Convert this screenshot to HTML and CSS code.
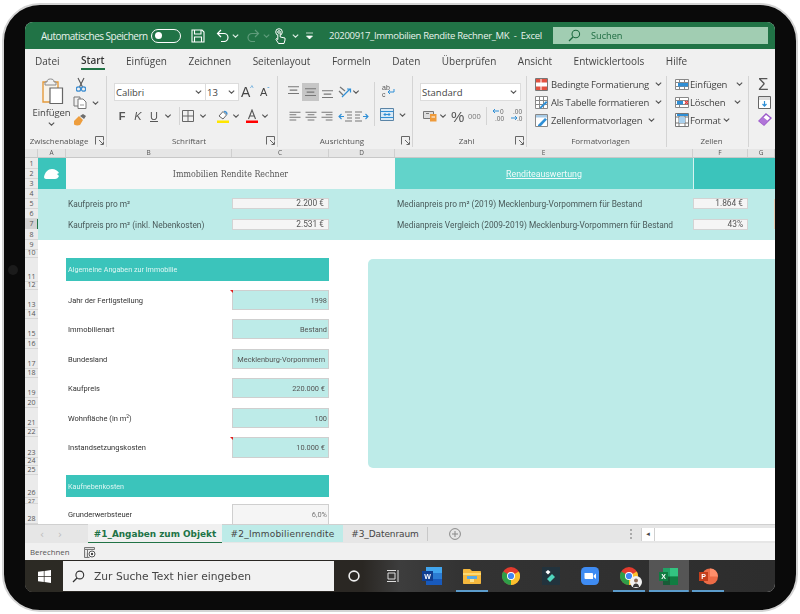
FILE: index.html
```html
<!DOCTYPE html>
<html lang="de">
<head>
<meta charset="utf-8">
<title>Immobilien Rendite Rechner</title>
<link rel="stylesheet" href="styles.css">
</head>
<body>
<svg class="defs" aria-hidden="true">
  <symbol id="chev" viewBox="0 0 7 4"><path d="M.8.6 3.5 3.2 6.2.6" fill="none" stroke="currentColor" stroke-width="1.1"/></symbol>
  <symbol id="launch" viewBox="0 0 9 9"><path d="M.5 8.5v-8h8v4M4 4l4 4M8.5 5.5v3h-3" fill="none" stroke="#666"/></symbol>
  <symbol id="lines" viewBox="0 0 15 13"><path d="M1 2h13M3 6h9M1 10h13" stroke="#777" stroke-width="1.3"/></symbol>
  <symbol id="lines-l" viewBox="0 0 15 13"><path d="M1 1.500h13M1 4.500h8M1 7.500h13M1 10.500h8" stroke="#777" stroke-width="1.200"/></symbol>
  <symbol id="lines-c" viewBox="0 0 15 13"><path d="M1 1.500h13M3.500 4.500h8M1 7.500h13M3.500 10.500h8" stroke="#777" stroke-width="1.200"/></symbol>
  <symbol id="lines-r" viewBox="0 0 15 13"><path d="M1 1.500h13M6 4.500h8M1 7.500h13M6 10.500h8" stroke="#777" stroke-width="1.200"/></symbol>
</svg>
<main class="device">
  <span class="camera"></span>
  <div class="screen">
    <header class="titlebar">
      <span class="autosave">Automatisches Speichern</span>
      <span class="toggle"><i></i></span>
      <svg class="qa qa-save" width="14" height="14" viewBox="0 0 14 14"><path d="M1 1h10l2 2v10H1zM3.5 1v4h6.500V1M3.500 13V8h7v5" fill="none" stroke="#fff" stroke-width="1.100"/></svg>
      <svg class="qa qa-undo" width="13" height="13" viewBox="0 0 13 13"><path d="M5 1 1.500 4.500 5 8M2 4.500h6a3.500 3.500 0 0 1 0 8H5" fill="none" stroke="#fff" stroke-width="1.200"/></svg>
      <svg class="chev qa-c1"><use href="#chev"/></svg>
      <svg class="qa qa-redo" width="13" height="13" viewBox="0 0 13 13"><path d="M8 1l3.500 3.500L8 8M11 4.500H5a3.500 3.500 0 0 0 0 8h3" fill="none" stroke="#5f9c7b" stroke-width="1.200"/></svg>
      <svg class="chev qa-c2"><use href="#chev"/></svg>
      <svg class="qa qa-touch" width="12" height="16" viewBox="0 0 12 16"><circle cx="5" cy="4" r="3.300" fill="none" stroke="#fff"/><circle cx="5" cy="4" r="1.300" fill="none" stroke="#fff"/><path d="M3.800 7v4.500L2.500 10.500 2 11.500l2.500 4H10l1-3.500v-2L6.200 9V5" fill="#217346" stroke="#fff"/></svg>
      <svg class="chev qa-c3"><use href="#chev"/></svg>
      <svg class="qa-more" width="9" height="8" viewBox="0 0 9 8"><path d="M1 1h7M1.500 4h6L4.500 7z" fill="#fff" stroke="#fff" stroke-width=".7"/></svg>
      <span class="doc-title">20200917_Immobilien Rendite Rechner_MK &nbsp;-&nbsp; Excel</span>
      <div class="searchbox">
        <svg width="13" height="13" viewBox="0 0 13 13"><circle cx="7.800" cy="5" r="3.800" fill="none" stroke="#1d6b40" stroke-width="1.100"/><path d="M5 8 1 12" stroke="#1d6b40" stroke-width="1.200"/></svg>
        <span>Suchen</span>
      </div>
    </header>

    <nav class="tabs">
      <span>Datei</span><span class="on">Start</span><span>Einfügen</span><span>Zeichnen</span><span>Seitenlayout</span><span>Formeln</span><span>Daten</span><span>Überprüfen</span><span>Ansicht</span><span>Entwicklertools</span><span>Hilfe</span>
    </nav>

    <section class="ribbon">
      <div class="group g-clip">
        <div class="group-body clip-body">
          <div class="paste">
            <svg width="24" height="27" viewBox="0 0 24 27"><path d="M3 4h15v20H3z" fill="#f7f3ea" stroke="#e49b3c" stroke-width="1.400"/><path d="M7 4c0-2 1-3 3.500-3S14 2 14 4h2v3H5V4z" fill="#f2f2f2" stroke="#8a8a8a"/><path d="M10 10h12.500v15.500H10z" fill="#fff" stroke="#666" stroke-width="1.200"/></svg>
            <span>Einfügen</span>
            <svg class="chev"><use href="#chev"/></svg>
          </div>
          <div class="clip-tools">
            <svg width="10" height="15" viewBox="0 0 10 15"><path d="M2 1l4.500 9M8 1 3.500 10" stroke="#555" stroke-width="1.100"/><circle cx="2.500" cy="12" r="2.200" fill="none" stroke="#3f8fd2" stroke-width="1.300"/><circle cx="7.500" cy="12" r="2.200" fill="none" stroke="#3f8fd2" stroke-width="1.300"/></svg>
            <span class="tool-row"><svg width="14" height="13" viewBox="0 0 14 13"><path d="M1 1h6v9H1z" fill="#f0f0f0" stroke="#777"/><path d="M5 3h5l3 3v6.500H5z" fill="#fff" stroke="#777"/><path d="M7 9h4" stroke="#999"/></svg><svg class="chev"><use href="#chev"/></svg></span>
            <svg width="14" height="13" viewBox="0 0 14 13"><path d="M1 8 6 3l4 4-3 5c-2 .6-4 .6-6-.5z" fill="#ed9d3d"/><path d="M7 3 10 1l3 2-2 3z" fill="#6d6d6d"/></svg>
          </div>
        </div>
        <div class="group-label"><span>Zwischenablage</span><svg class="launcher"><use href="#launch"/></svg></div>
      </div>

      <div class="group g-font">
        <div class="group-body">
          <div class="row-top">
            <div class="combo font-name"><span>Calibri</span><svg class="chev"><use href="#chev"/></svg></div>
            <div class="combo font-size"><span>13</span><svg class="chev"><use href="#chev"/></svg></div>
            <span class="grow-a big">A<sup>^</sup></span>
            <span class="grow-a small">A<sup>ˇ</sup></span>
          </div>
          <div class="row-low">
            <b class="fmt w16">F</b><i class="fmt w16">K</i><u class="fmt w16">U</u>
            <svg class="chev w12"><use href="#chev"/></svg>
            <span class="vsep font-sep"></span>
            <svg class="w16" width="12" height="12" viewBox="0 0 12 12"><path d="M.5.5h11v11H.5zM6 .5v11M.5 6h11" fill="none" stroke="#666"/></svg>
            <svg class="chev w14"><use href="#chev"/></svg>
            <svg class="w16 ml5" width="14" height="14" viewBox="0 0 14 14"><path d="M3 7 7 2.500 10.500 6 7 10z" fill="#fff" stroke="#666"/><path d="M8 2.500c2 0 3 1.500 3 3" fill="none" stroke="#3f8fd2" stroke-width="1.300"/><path d="M1 11.500h12V14H1z" fill="#ffe600"/></svg>
            <svg class="chev w10"><use href="#chev"/></svg>
            <svg class="w16 ml3" width="14" height="14" viewBox="0 0 14 14"><path d="M3.500 10 7 1l3.500 9M5 7h4" fill="none" stroke="#555" stroke-width="1.100"/><path d="M1 11.500h12V14H1z" fill="#f00"/></svg>
            <svg class="chev w10"><use href="#chev"/></svg>
          </div>
        </div>
        <div class="group-label"><span>Schriftart</span><svg class="launcher"><use href="#launch"/></svg></div>
      </div>

      <div class="group g-align">
        <div class="group-body align-body">
          <div class="align-main">
            <div class="row-top align-top">
              <span class="al"><svg width="13" height="11"><use href="#lines"/></svg></span>
              <span class="al al-on"><svg width="13" height="11"><use href="#lines"/></svg></span>
              <span class="al al-down"><svg width="13" height="11"><use href="#lines"/></svg></span>
              <svg class="orient" width="14" height="13" viewBox="0 0 14 13"><path d="M2 1l5 4M1 5l4 4" stroke="#777" stroke-width="1.300"/><path d="M4 11 12 3M9 3h3.500v3.500" fill="none" stroke="#2f8fd6" stroke-width="1.200"/></svg>
              <svg class="chev w8"><use href="#chev"/></svg>
            </div>
            <div class="row-low align-low">
              <svg class="w16" width="13" height="11"><use href="#lines-l"/></svg>
              <svg class="w16" width="13" height="11"><use href="#lines-c"/></svg>
              <svg class="w16" width="13" height="11"><use href="#lines-r"/></svg>
              <svg class="w16 ml2" width="14" height="11" viewBox="0 0 14 11"><path d="M7 1h7M9 4h5M9 7h5M7 10h7" stroke="#777"/><path d="M6 5.500H1M3.500 3 1 5.500 3.500 8" fill="none" stroke="#2f8fd6" stroke-width="1.100"/></svg>
              <svg class="w16 ml1" width="14" height="11" viewBox="0 0 14 11"><path d="M0 1h7M0 4h5M0 7h5M0 10h7" stroke="#777"/><path d="M8 5.500h5M10.500 3 13 5.500 10.500 8" fill="none" stroke="#2f8fd6" stroke-width="1.100"/></svg>
            </div>
          </div>
          <span class="vsep align-sep"></span>
          <div class="align-side">
            <svg class="wrap" width="13" height="15" viewBox="0 0 13 15"><text x="0" y="6.500" class="wrap-t">ab</text><text x="0" y="13.500" class="wrap-t">c</text><path d="M12 6v3H6M8 7 6 9l2 2" fill="none" stroke="#2f8fd6"/></svg>
            <span class="merge"><svg width="14" height="13" viewBox="0 0 14 13"><path d="M.5.500h13v12H.500z" fill="#d8e9f6" stroke="#5a84a6"/><path d="M4 6.500h6M5.500 5 4 6.500 5.500 8M8.500 5 10 6.500 8.500 8M.5 3.500h13M.5 9.500h13" fill="none" stroke="#2f8fd6"/></svg><svg class="chev"><use href="#chev"/></svg></span>
          </div>
        </div>
        <div class="group-label"><span>Ausrichtung</span><svg class="launcher"><use href="#launch"/></svg></div>
      </div>

      <div class="group g-num">
        <div class="group-body">
          <div class="row-top"><div class="combo num-fmt"><span>Standard</span><svg class="chev"><use href="#chev"/></svg></div></div>
          <div class="row-low num-low">
            <svg width="14" height="12" viewBox="0 0 14 12"><path d="M.5 1.500h10v7H.5z" fill="#ddd" stroke="#777"/><path d="M3 3.500h3" stroke="#777"/><path d="M7 4h6.500v7.500H7z" fill="#ee9a3a"/><path d="M8.500 7h3.500" stroke="#fff"/></svg>
            <svg class="chev w12"><use href="#chev"/></svg>
            <span class="pct">%</span>
            <span class="thou">000</span>
            <span class="vsep num-sep"></span>
            <span class="dec"><svg width="13" height="14" viewBox="0 0 13 14"><path d="M7 3H1M3 1 1 3l2 2" fill="none" stroke="#2f8fd6"/><text x="8" y="6" class="dec-t">0</text><text x="3" y="13" class="dec-t">.00</text></svg></span>
            <span class="dec"><svg width="13" height="14" viewBox="0 0 13 14"><text x="3" y="6" class="dec-t">.00</text><path d="M1 10h6M5 8l2 2-2 2" fill="none" stroke="#2f8fd6"/><text x="7" y="13" class="dec-t">.0</text></svg></span>
          </div>
        </div>
        <div class="group-label"><span>Zahl</span><svg class="launcher"><use href="#launch"/></svg></div>
      </div>

      <div class="group g-styles">
        <div class="group-body stack">
          <div class="stack-row"><svg width="13" height="13" viewBox="0 0 13 13"><path d="M.5.500h12v12H.500z" fill="#fff" stroke="#777"/><path d="M1 1h11v3.500H1zM1 8.500h11V12H1z" fill="#e25241"/><path d="M6 1v11" stroke="#fff"/></svg><span>Bedingte Formatierung</span><svg class="chev"><use href="#chev"/></svg></div>
          <div class="stack-row"><svg width="13" height="13" viewBox="0 0 13 13"><path d="M.5.500h12v12H.500zM.5 4.500h12M.5 8.500h12M4.500.500v12M8.500.500v12" fill="#fff" stroke="#888"/><path d="M5 11 11 5l1.500 1.500L6 12.500H5z" fill="#2f8fd6"/></svg><span>Als Tabelle formatieren</span><svg class="chev"><use href="#chev"/></svg></div>
          <div class="stack-row"><svg width="13" height="13" viewBox="0 0 13 13"><path d="M.5.500h12v12H.500z" fill="#fff" stroke="#888"/><path d="M1 1h11v2.500H1z" fill="#a8cbe6"/><path d="M3 11 10 4l2 1.500-6 6.500H3z" fill="#2f8fd6"/></svg><span>Zellenformatvorlagen</span><svg class="chev"><use href="#chev"/></svg></div>
        </div>
        <div class="group-label"><span>Formatvorlagen</span></div>
      </div>

      <div class="group g-cells">
        <div class="group-body stack">
          <div class="stack-row"><svg width="14" height="13" viewBox="0 0 14 13"><path d="M.5 1.500h13v10H.500zM.5 4.500h13M.5 8.500h13M4.500 1.500v10M9.500 1.500v10" fill="#fff" stroke="#888"/><path d="M3 5h10v3.500H3z" fill="#2f8fd6"/></svg><span>Einfügen</span><svg class="chev wide"><use href="#chev"/></svg></div>
          <div class="stack-row"><svg width="14" height="13" viewBox="0 0 14 13"><path d="M.5 1.500h13v10H.500zM.5 4.500h13M.5 8.500h13M4.500 1.500v10" fill="#fff" stroke="#888"/><path d="M2 5h6v3.500H2z" fill="#2f8fd6"/><path d="M10 5l3 3M13 5l-3 3" stroke="#e23b3b" stroke-width="1.200"/></svg><span>Löschen</span><svg class="chev wide"><use href="#chev"/></svg></div>
          <div class="stack-row"><svg width="14" height="14" viewBox="0 0 14 14"><path d="M.5.500h13v13H.500zM.5 4h13M.5 10h13M4 .500v13M10 .500v13" fill="#fff" stroke="#777"/><path d="M2 1h11v2H2z" fill="#2f8fd6"/><path d="M4 4h6v6H4z" fill="#a8d0ee"/></svg><span>Format</span><svg class="chev near"><use href="#chev"/></svg></div>
        </div>
        <div class="group-label"><span>Zellen</span></div>
      </div>

      <div class="group g-edit">
        <span class="sigma">Σ</span>
        <svg width="13" height="13" viewBox="0 0 13 13"><path d="M.5.500h12v12H.500z" fill="#fff" stroke="#666"/><path d="M1 1h11v3H1z" fill="#ddd"/><path d="M6.500 5v5M4.500 8l2 2.200 2-2.200" fill="none" stroke="#2f8fd6" stroke-width="1.200"/></svg>
        <svg width="14" height="13" viewBox="0 0 14 13"><path d="M1 8 8 1l5 4-7 7z" fill="#fff" stroke="#9b59c9" stroke-width="1.400"/><path d="M1 8l4-4 5 4-4 4z" fill="#b074d8"/></svg>
      </div>
    </section>

    <div class="col-heads">
      <span class="corner"></span>
      <span>A</span><span>B</span><span>C</span><span>D</span><span>E</span><span>F</span><span>G</span>
    </div>

    <div class="sheet">
      <div class="row-heads">
        <span>1</span><span>2</span><span>3</span><span>4</span><span>5</span><span>6</span><span class="sel">7</span><span>8</span><span>9</span><span>10</span><span>11</span><span>12</span><span>13</span><span>14</span><span>15</span><span>16</span><span>17</span><span>18</span><span>19</span><span>20</span><span>21</span><span>22</span><span>23</span><span>24</span><span>25</span><span>26</span><span class="tight">27</span><span>28</span>
      </div>
      <div class="cells">
        <div class="logo-cell"><svg width="16" height="10" viewBox="0 0 16 10"><path d="M0 8C1 3 4 0 8 0c3 0 6 2 7 4l-2 1 2 2c-1 2-2 3-4 3H2C1 10 0 9 0 8z" fill="#fff"/></svg></div>
        <div class="title-cell">Immobilien Rendite Rechner</div>
        <div class="report-cell">Renditeauswertung</div>
        <div class="accent-cell"></div>
        <div class="band"></div>
        <div class="band-edge"></div>

        <div class="kpi-label r5 cb">Kaufpreis pro m²</div>
        <div class="kpi-value r5 cc">2.200 €</div>
        <div class="kpi-label r7 cb">Kaufpreis pro m² (inkl. Nebenkosten)</div>
        <div class="kpi-value r7 cc">2.531 €</div>
        <div class="kpi-label r5 ce">Medianpreis pro m² (2019) Mecklenburg-Vorpommern für Bestand</div>
        <div class="kpi-value r5 cf">1.864 €</div>
        <div class="kpi-label r7 ce">Medianpreis Vergleich (2009-2019) Mecklenburg-Vorpommern für Bestand</div>
        <div class="kpi-value r7 cf">43%</div>

        <div class="section r11">Algemeine Angaben zur Immobilie</div>
        <div class="form-label r13">Jahr der Fertigstellung</div>
        <div class="form-value r13 flag">1998</div>
        <div class="form-label r15">Immobilienart</div>
        <div class="form-value r15">Bestand</div>
        <div class="form-label r17">Bundesland</div>
        <div class="form-value r17 inset">Mecklenburg-Vorpommern</div>
        <div class="form-label r19">Kaufpreis</div>
        <div class="form-value r19 inset">220.000 €</div>
        <div class="form-label r21">Wohnfläche (in m<sup>2</sup>)</div>
        <div class="form-value r21">100</div>
        <div class="form-label r23">Instandsetzungskosten</div>
        <div class="form-value r23 flag inset">10.000 €</div>

        <div class="section r26">Kaufnebenkosten</div>
        <div class="form-label r28">Grunderwerbsteuer</div>
        <div class="form-value r28 plain">6,0%</div>

        <div class="chart-shape"></div>
      </div>
    </div>

    <div class="sheet-tabs">
      <div class="tab-nav"><span>‹</span><span>›</span></div>
      <div class="tab tab-active">#1_Angaben zum Objekt</div>
      <div class="tab tab-teal">#2_Immobilienrendite</div>
      <div class="tab tab-plain">#3_Datenraum</div>
      <svg class="tab-add" width="12" height="12" viewBox="0 0 12 12"><circle cx="6" cy="6" r="5.400" fill="none" stroke="#888"/><path d="M6 3v6M3 6h6" stroke="#888"/></svg>
      <span class="tab-dots"></span>
      <div class="hscroll"><span class="hscroll-btn">◂</span></div>
    </div>

    <footer class="statusbar">
      <span>Berechnen</span>
      <svg width="12" height="12" viewBox="0 0 12 12"><path d="M.5 1.500h10v2H.5zM.5 3.500v8h5M3.500 3.500v8" fill="#ddd" stroke="#777"/><circle cx="8" cy="8" r="3" fill="#fff" stroke="#555"/><circle cx="8" cy="8" r="1.200" fill="#444"/></svg>
    </footer>

    <div class="taskbar">
      <div class="start"><svg width="13" height="13" viewBox="0 0 13 13"><path d="M0 1.800 5.800 1v5.200H0zM6.500.900 13 0v6.200H6.500zM0 6.900h5.800V12L0 11.200zM6.500 6.900H13V13l-6.500-.9z" fill="#fff"/></svg></div>
      <div class="task-search">
        <svg width="13" height="13" viewBox="0 0 13 13"><circle cx="7.800" cy="5" r="3.900" fill="none" stroke="#333" stroke-width="1.100"/><path d="M5 8 1 12" stroke="#333" stroke-width="1.300"/></svg>
        <span>Zur Suche Text hier eingeben</span>
      </div>
      <div class="task-item"><svg width="12" height="12" viewBox="0 0 12 12"><circle cx="6" cy="6" r="4.900" fill="none" stroke="#eee" stroke-width="1.600"/></svg></div>
      <div class="task-item"><svg width="13" height="12" viewBox="0 0 13 12"><path d="M0 .5h9M0 11.500h9M1 3h7v6H1zM11 0v12" fill="none" stroke="#ddd"/></svg></div>
      <div class="task-item"><svg width="20" height="18" viewBox="0 0 20 18"><path d="M4 0h16v18H4z" fill="#185abd"/><path d="M4 0h16v6H4z" fill="#41a5ee"/><path d="M4 6h16v6H4z" fill="#2b7cd3"/><path d="M0 4h11v10H0z" fill="#103f91"/><text x="5.500" y="12" class="app-letter">W</text></svg></div>
      <div class="task-item running"><svg width="18" height="15" viewBox="0 0 18 15"><path d="M0 1c0-.6.400-1 1-1h6l2 2h8c.6 0 1 .400 1 1v11c0 .6-.400 1-1 1H1c-.6 0-1-.400-1-1z" fill="#f5b83d"/><path d="M0 4h18v2H0z" fill="#fcd972"/><path d="M4 7h10v3H4z" fill="#56a9e6"/><path d="M7 10h4v3H7z" fill="#fbe28e"/></svg></div>
      <div class="task-item"><svg width="18" height="18" viewBox="0 0 18 18" class="chrome"><circle cx="9" cy="9" r="9" fill="#e33b2e"/><path d="M9 9 1.200 4.500A9 9 0 0 0 9 18z" fill="#2f9e48"/><path d="M9 9v9a9 9 0 0 0 7.800-13.500z" fill="#fbc02d"/><circle cx="9" cy="9" r="4" fill="#fff"/><circle cx="9" cy="9" r="3.100" fill="#4285f4"/></svg></div>
      <div class="task-item"><span class="tile"><svg width="12" height="14" viewBox="0 0 12 14"><path d="M3 1l2.500 2L3 5.500.5 3z" fill="#fff"/><path d="M7 5l3 3-5 5-3-3z" fill="#4fd6c0"/></svg></span></div>
      <div class="task-item"><svg width="18" height="18" viewBox="0 0 18 18"><rect width="18" height="18" rx="4.500" fill="#3f8cf3"/><path d="M3.500 6h7.500a1 1 0 0 1 1 1v5H4.500a1 1 0 0 1-1-1zM12.700 8.500l2.300-2v5.500l-2.300-2z" fill="#fff"/></svg></div>
      <div class="task-item running"><span class="avatar-wrap"><svg width="18" height="18" viewBox="0 0 18 18"><circle cx="9" cy="9" r="9" fill="#e33b2e"/><path d="M9 9 1.200 4.500A9 9 0 0 0 9 18z" fill="#2f9e48"/><path d="M9 9v9a9 9 0 0 0 7.800-13.500z" fill="#fbc02d"/><circle cx="9" cy="9" r="4" fill="#fff"/><circle cx="9" cy="9" r="3.100" fill="#4285f4"/></svg><svg class="avatar" width="12" height="12" viewBox="0 0 12 12"><circle cx="6" cy="6" r="6" fill="#f2f2f2"/><circle cx="6" cy="4.500" r="2" fill="#8a6a55"/><path d="M2.800 11c.4-2.500 1.800-3.500 3.200-3.500s2.800 1 3.200 3.500z" fill="#3a3a3a"/></svg></span></div>
      <div class="task-item running task-on"><svg width="19" height="17" viewBox="0 0 19 17"><path d="M4 0h15v17H4z" fill="#21a366"/><path d="M11 0h8v8.500h-8z" fill="#33c481"/><path d="M4 8.500h7V17H4z" fill="#185c37"/><path d="M11 8.500h8V17h-8z" fill="#107c41"/><path d="M0 4h9v9H0z" fill="#107c41"/><text x="4.500" y="11" class="app-letter">X</text></svg></div>
      <div class="task-item running"><svg width="19" height="17" viewBox="0 0 19 17"><circle cx="11" cy="8.500" r="8" fill="#ed6c47"/><path d="M11 .5a8 8 0 0 1 8 8h-8z" fill="#ff8f6b"/><path d="M0 4h9v9H0z" fill="#c43e1c"/><text x="4.500" y="11" class="app-letter">P</text></svg></div>
    </div>
  </div>
</main>
</body>
</html>
```

FILE: styles.css
```css
* { box-sizing: border-box; }
html, body { margin: 0; height: 614px; overflow: hidden; background: #fff; }
body { padding: 3px 2px 2px; font-family: "Open Sans", "Liberation Sans", sans-serif; }
.defs { width: 0; height: 0; position: absolute; }

.device {
  position: relative;
  height: 609px;
  padding: 17px 21px 18px;
  background: #0a0a0a;
  border: 2px solid #d4d4d4;
  border-radius: 38px;
}
.camera {
  position: absolute; left: 4px; top: 260px;
  width: 10px; height: 10px; border-radius: 50%; background: #1b1b1b;
}
.screen {
  height: 570px; width: 750px;
  display: flex; flex-direction: column;
  background: #f0f0f0;
  border-radius: 8px;
  overflow: hidden;
  filter: blur(.35px);
}

/* title bar */
.titlebar {
  flex: 0 0 27px;
  display: flex; align-items: center;
  background: #217346; color: #e8f2ec;
  font-size: 10px;
  padding-left: 16px;
}
.autosave { flex: 0 0 110px; white-space: nowrap; letter-spacing: -.5px; }
.toggle {
  flex: none;
  width: 30px; height: 14px; border: 1px solid #fff; border-radius: 7px;
  display: flex; align-items: center; padding-left: 3px;
}
.toggle i { width: 7px; height: 7px; background: #fff; border-radius: 50%; }
.chev { width: 7px; height: 4px; color: #555; flex: none; }
.titlebar .chev { color: #dfeee6; }
.qa-save { margin-left: 10px; flex: none; }
.qa-undo { margin-left: 11px; flex: none; }
.qa-c1 { margin-left: 3px; }
.qa-redo { margin-left: 8px; flex: none; }
.titlebar .qa-c2 { margin-left: 3px; color: #5f9c7b; }
.qa-touch { margin-left: 4px; flex: none; }
.qa-c3 { margin-left: 6px; }
.qa-more { margin-left: 6px; flex: none; }
.doc-title { margin-left: 15px; flex: 0 0 224px; white-space: nowrap; font-size: 9.500px; letter-spacing: -.3px; }
.searchbox {
  flex: 0 0 215px; height: 17px;
  display: flex; align-items: center; gap: 10px; padding-left: 15px;
  background: #a1cdb2; color: #1d6b40;
  font-size: 9.200px;
}

/* ribbon tabs */
.tabs {
  flex: 0 0 23px;
  display: flex; align-items: center;
  padding-left: 10px; gap: 21.500px;
  font-size: 10px; color: #444;
}
.tabs .on {
  font-weight: 600; color: #333;
  align-self: stretch; display: flex; align-items: center;
  box-shadow: inset 0 -2px 0 #217346;
  height: 21px;
}

/* ribbon */
.ribbon { flex: 0 0 77px; display: flex; padding-top: 4px; color: #444; overflow: hidden; }
.group {
  display: flex; flex-direction: column;
  border-right: 1px solid #d4d4d4;
  height: 71px; flex: none;
}
.group-body { flex: 1; min-height: 0; }
.group-label {
  flex: 0 0 13px;
  display: flex; align-items: center;
  font-size: 8px; letter-spacing: -.05px; color: #555; white-space: nowrap;
}
.group-label span { flex: 1; text-align: center; }
.launcher { width: 9px; height: 9px; margin: 0 2px; flex: none; }
.g-clip { width: 82px; }
.g-font { width: 171px; padding: 7px 0 0 7px; }
.g-align { width: 135px; padding: 7px 0 0 7px; }
.g-num { width: 114px; padding: 7px 0 0 7px; }
.g-styles { width: 140px; padding-left: 8px; }
.g-cells { width: 82px; padding-left: 8px; }
.g-edit { width: 26px; border: 0; padding: 2px 0 0 9px; display: flex; flex-direction: column; gap: 4px; align-items: flex-start; }

.clip-body { display: flex; }
.paste {
  width: 48px; display: flex; flex-direction: column; align-items: center;
  font-size: 9.500px; letter-spacing: -.1px; padding-top: 2px; padding-left: 5px;
}
.paste span { margin-top: 1px; line-height: 13px; }
.paste .chev { margin-top: 3px; }
.clip-tools { display: flex; flex-direction: column; gap: 4px; align-items: flex-start; padding-top: 1px; }
.clip-tools > svg:first-child { margin-left: 3px; }
.tool-row { display: flex; align-items: center; gap: 5px; height: 13px; }

.row-top { display: flex; align-items: center; height: 18px; }
.row-low { display: flex; align-items: center; height: 18px; margin-top: 6px; }
.combo {
  height: 18px; display: flex; align-items: center; justify-content: space-between;
  background: #fff; border: 1px solid #dcdcdc;
  padding: 0 3px 0 1px; font-size: 9.500px; color: #444;
}
.font-name { width: 92px; }
.font-size { width: 34px; margin-left: -1px; }
.num-fmt { width: 101px; }
.grow-a { display: inline-flex; font-family: "Liberation Sans", sans-serif; }
.grow-a sup { font-size: 7px; color: #2f8fd6; line-height: 1; }
.big { font-size: 14px; margin-left: 2px; width: 19px; }
.small { font-size: 11px; width: 14px; }
.fmt {
  display: flex; align-items: center; justify-content: center;
  font-family: "Liberation Sans", sans-serif; font-size: 11px; color: #555;
  height: 16px;
}
.w8 { width: 8px; }
.w10 { width: 10px; }
.w12 { width: 12px; }
.w14 { width: 14px; }
.w16 { width: 16px; }
.ml1 { margin-left: 1px; }
.ml2 { margin-left: 2px; }
.ml3 { margin-left: 3px; }
.ml5 { margin-left: 5px; }
.vsep { display: block; width: 1px; background: #d4d4d4; flex: none; }
.font-sep { height: 18px; margin: 0 0 0 5px; }

.align-body { display: flex; }
.align-main { width: 89px; }
.al { width: 17px; height: 18px; display: flex; align-items: center; justify-content: center; }
.al svg { margin-bottom: 4px; }
.al-on { background: #c6c6c6; }
.al-on svg { margin-bottom: 0; }
.al-down svg { margin: 5px 0 0; }
.orient { margin-left: 2px; }
.align-low { padding-left: 2px; }
.align-sep { height: 44px; margin-top: -1px; }
.align-side { display: flex; flex-direction: column; padding-left: 5px; gap: 10px; }
.wrap { margin-left: 2px; }
.wrap-t { font: 7px "Liberation Sans", sans-serif; fill: #555; }
.merge { display: flex; align-items: center; gap: 5px; }

.num-low { padding-left: 3px; }
.pct { font-size: 15px; line-height: 1; margin-left: 2px; width: 16px; color: #555; font-family: "Liberation Sans", sans-serif; }
.thou { font-size: 7.500px; color: #777; margin-left: 1px; width: 18px; }
.num-sep { height: 18px; }
.dec { margin-left: 5px; width: 13px; }
.dec-t { font: 6.500px "Liberation Sans", sans-serif; fill: #666; }

.stack { display: flex; flex-direction: column; margin-top: -1px; }
.stack-row {
  height: 18px; display: flex; align-items: center; gap: 3px;
  font-size: 9.500px; white-space: nowrap; letter-spacing: -.2px;
}
.stack-row svg { flex: none; }
.stack-row .chev { margin-left: 3px; }
.stack-row .wide { margin-left: 8px; }
.stack-row .near { margin-left: 1px; }
.g-cells .stack-row { gap: 1px; }
.sigma { font: 17px/14px "Liberation Sans", sans-serif; color: #555; }

/* sheet */
.col-heads {
  flex: 0 0 9px;
  display: grid; grid-template-columns: 13px 28px 166px 97px 66px 298px 55px 27px;
  background: #e6e6e6; border-bottom: 1px solid #c8c8c8;
  font-size: 6.500px; line-height: 8px; color: #555; text-align: center;
}
.col-heads span { border-right: 1px solid #cfcfcf; }
.sheet {
  --rows: 11px 10px 10px 10px 10px 10px 10px 11px 10px 8px 24px 8px 20px 9px 20px 10px 20px 9px 20px 10px 20px 9px 21px 8px 9px 23px 6px 20px;
  flex: 0 0 366px;
  display: grid; grid-template-columns: 13px 737px;
  background: #fff;
  overflow: hidden;
}
.row-heads {
  display: grid; grid-template-rows: var(--rows);
  background: #ebebeb;
  font-size: 7px; color: #555; text-align: center;
}
.row-heads span {
  display: flex; align-items: flex-end; justify-content: center;
  box-shadow: inset 0 -1px 0 #d6d6d6; line-height: 6px; padding-bottom: 2px;
}
.row-heads .tight { padding-bottom: 0; font-size: 6px; line-height: 5px; }
.row-heads .sel { background: #d2d2d2; box-shadow: inset -1px 0 0 #217346; }

.cells {
  position: relative;
  display: grid;
  grid-template-columns: 28px 166px 97px 66px 298px 55px 27px;
  grid-template-rows: var(--rows);
  color: #444;
  font-family: Roboto, sans-serif;
}
.logo-cell { grid-area: 1 / 1 / 4 / 2; background: #3bc4bb; display: flex; align-items: center; justify-content: center; }
.title-cell {
  grid-area: 1 / 2 / 4 / 5; background: #f7f7f7;
  display: flex; align-items: center; justify-content: center;
  font: 8.800px "DejaVu Serif Condensed", "DejaVu Serif", serif; color: #555;
}
.report-cell {
  grid-area: 1 / 5 / 4 / 6; background: #62d3ca; color: #f2fbfa;
  display: flex; align-items: center; justify-content: center;
  font-size: 8.800px; text-decoration: underline;
}
.accent-cell { grid-area: 1 / 6 / 4 / 8; background: #3bc4bb; border-left: 1px solid #d6f3f0; }
.band { grid-area: 4 / 1 / 9 / 8; background: #bdebe8; }
.band-edge { grid-area: 5 / 7 / 8 / 8; justify-self: end; width: 1px; background: #e3c7ad; }

.r5 { grid-row: 4 / 7; }
.r7 { grid-row: 6 / 9; }
.cb { grid-column: 2; }
.cc { grid-column: 3; }
.ce { grid-column: 5; }
.cf { grid-column: 6; }
.kpi-label {
  align-self: center; padding-left: 2px;
  font-size: 8.350px; white-space: nowrap; color: #4a5a5a;
}
.kpi-value {
  align-self: center; height: 11px; margin-bottom: 1px;
  background: #f5f5f5; border: 1px solid #d3d3d3;
  font-size: 8.350px; line-height: 9px; text-align: right; padding-right: 4px; color: #555;
}
.section {
  grid-column: 2 / 4; margin-bottom: 1px;
  display: flex; align-items: center; padding-left: 2px;
  background: #3bc4bb; color: #dff6f3; font-size: 7.200px;
}
.r11 { grid-row: 11; }
.r26 { grid-row: 26; }
.r13 { grid-row: 13; }
.r15 { grid-row: 15; }
.r17 { grid-row: 17; }
.r19 { grid-row: 19; }
.r21 { grid-row: 21; }
.r23 { grid-row: 23; }
.r28 { grid-row: 28; }
.form-label {
  grid-column: 2; align-self: center; padding-left: 2px;
  font-size: 7.500px; color: #333; white-space: nowrap;
}
.form-label sup { font-size: 5px; line-height: 0; }
.form-value {
  position: relative;
  grid-column: 3;
  display: flex; align-items: center; justify-content: flex-end;
  padding-right: 1px;
  background: #bdebe8; border: 1px solid #cfcfcf;
  font-size: 7.400px; color: #555; white-space: nowrap;
}
.form-value.inset { padding-right: 3px; }
.form-value.plain { background: #f5f5f5; border-bottom: 0; color: #777; }
.flag::before {
  content: ""; position: absolute; left: -3px; top: -1px;
  border-top: 3px solid #e02020; border-left: 3px solid transparent;
}
.chart-shape {
  position: absolute; left: 330px; top: 101px; width: 420px; height: 209px;
  background: #bdebe8; border-radius: 5px;
}

/* sheet tabs */
.sheet-tabs {
  flex: 0 0 19px;
  display: flex; align-items: stretch;
  background: #e6e6e6; border-top: 1px solid #d0d0d0;
  font-family: "DejaVu Sans", sans-serif; font-size: 9px; color: #444;
}
.tab-nav { width: 63px; display: flex; gap: 14px; padding-left: 15px; color: #bbb; font-size: 10px; align-items: center; }
.tab { display: flex; align-items: center; justify-content: center; white-space: nowrap; }
.tab-active { width: 134px; background: #f0f0f0; color: #217346; font-weight: 700; box-shadow: inset 0 -1px 0 #217346; margin-top: -1px; font-size: 8.900px; }
.tab-teal { width: 121px; background: #bdebe8; margin: 0 0 1px; letter-spacing: .2px; }
.tab-plain { width: 85px; border-right: 1px solid #c8c8c8; margin: 2px 0; letter-spacing: -.1px; }
.tab-add { margin: 3px 0 0 21px; }
.tab-dots { width: 1px; margin: 4px 0 4px 169px; border-left: 2px dotted #aaa; }
.hscroll { margin: 3px 0 2px 9px; flex: 1; background: #fff; border-left: 1px solid #d0d0d0; display: flex; }
.hscroll-btn { width: 13px; border-right: 1px solid #d0d0d0; font-size: 7px; line-height: 13px; text-align: center; color: #444; }

.statusbar {
  flex: 0 0 17px;
  display: flex; align-items: center; gap: 15px;
  padding-left: 5px;
  background: #f0f0f0; font-size: 7.800px; color: #555;
}

/* taskbar */
.taskbar {
  flex: 0 0 32px;
  display: flex; align-items: stretch;
  background: linear-gradient(90deg, #2a2723 0, #2a2723 45%, #3d3d3d 50%, #333 58%, #2d2d2d 100%);
}
.start { width: 38px; display: flex; align-items: center; justify-content: center; background: #2c2a24; }
.task-search {
  width: 271px; margin: 1px 0;
  display: flex; align-items: center; gap: 9px; padding-left: 9px;
  background: #f2f2f2; color: #444;
  font-family: "DejaVu Sans", sans-serif; font-size: 10.700px;
  white-space: nowrap;
}
.task-item {
  flex: 0 0 39.400px;
  display: grid; place-items: center;
}
.running { background: linear-gradient(#5c9ccc, #5c9ccc) bottom center / 32px 2px no-repeat; }
.task-on { background: linear-gradient(#5c9ccc, #5c9ccc) bottom center / 100% 2px no-repeat, #555; }
.app-letter { font: 700 7px "Liberation Sans", sans-serif; fill: #fff; text-anchor: middle; }
.tile { width: 18px; height: 18px; background: #22333d; display: grid; place-items: center; }
.avatar-wrap { position: relative; display: block; width: 18px; height: 18px; }
.avatar { position: absolute; right: -4px; bottom: -3px; }
```
